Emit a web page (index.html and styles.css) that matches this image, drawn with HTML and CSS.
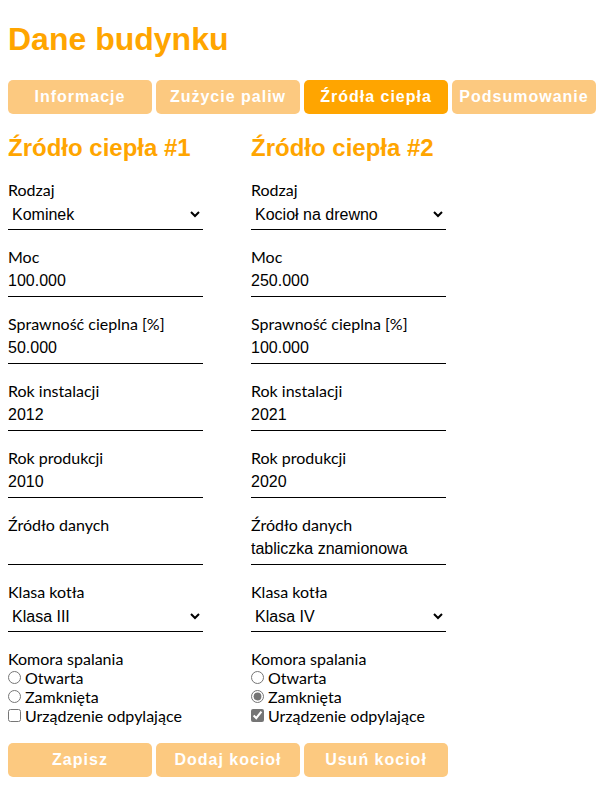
FILE: index.html
```
<!DOCTYPE html>
<html lang="pl">
<head>
<meta charset="utf-8">
<meta name="viewport" content="width=device-width, initial-scale=1">
<title>Dane budynku</title>
<link rel="stylesheet" href="styles.css">
</head>
<body>
<h1>Dane budynku</h1>
<nav class="bar">
  <button type="button" class="btn">Informacje</button>
  <button type="button" class="btn">Zużycie paliw</button>
  <button type="button" class="btn btn-active" aria-current="page">Źródła ciepła</button>
  <button type="button" class="btn">Podsumowanie</button>
</nav>
<form>
  <div class="sources">
    <section class="source">
      <h2>Źródło ciepła #1</h2>
      <div class="field"><label for="type1">Rodzaj</label><select id="type1" class="control"><option>Kominek</option></select></div>
      <div class="field"><label for="power1">Moc</label><input id="power1" class="control" type="text" value="100.000"></div>
      <div class="field"><label for="eff1">Sprawność cieplna [%]</label><input id="eff1" class="control" type="text" value="50.000"></div>
      <div class="field"><label for="inst1">Rok instalacji</label><input id="inst1" class="control" type="text" value="2012"></div>
      <div class="field"><label for="prod1">Rok produkcji</label><input id="prod1" class="control" type="text" value="2010"></div>
      <div class="field"><label for="data1">Źródło danych</label><input id="data1" class="control" type="text" value=""></div>
      <div class="field"><label for="class1">Klasa kotła</label><select id="class1" class="control"><option>Klasa III</option></select></div>
      <fieldset class="chamber">
        <legend>Komora spalania</legend>
        <label class="choice"><input type="radio" name="chamber1">Otwarta</label>
        <label class="choice"><input type="radio" name="chamber1">Zamknięta</label>
        <label class="choice"><input type="checkbox">Urządzenie odpylające</label>
      </fieldset>
    </section>
    <section class="source">
      <h2>Źródło ciepła #2</h2>
      <div class="field"><label for="type2">Rodzaj</label><select id="type2" class="control"><option>Kocioł na drewno</option></select></div>
      <div class="field"><label for="power2">Moc</label><input id="power2" class="control" type="text" value="250.000"></div>
      <div class="field"><label for="eff2">Sprawność cieplna [%]</label><input id="eff2" class="control" type="text" value="100.000"></div>
      <div class="field"><label for="inst2">Rok instalacji</label><input id="inst2" class="control" type="text" value="2021"></div>
      <div class="field"><label for="prod2">Rok produkcji</label><input id="prod2" class="control" type="text" value="2020"></div>
      <div class="field"><label for="data2">Źródło danych</label><input id="data2" class="control" type="text" value="tabliczka znamionowa"></div>
      <div class="field"><label for="class2">Klasa kotła</label><select id="class2" class="control"><option>Klasa IV</option></select></div>
      <fieldset class="chamber">
        <legend>Komora spalania</legend>
        <label class="choice"><input type="radio" name="chamber2">Otwarta</label>
        <label class="choice"><input type="radio" name="chamber2" checked>Zamknięta</label>
        <label class="choice"><input type="checkbox" checked>Urządzenie odpylające</label>
      </fieldset>
    </section>
  </div>
  <div class="bar">
    <button type="button" class="btn">Zapisz</button>
    <button type="button" class="btn">Dodaj kocioł</button>
    <button type="button" class="btn">Usuń kocioł</button>
  </div>
</form>
</body>
</html>
```
FILE: styles.css
```
* {
  box-sizing: border-box;
}

body {
  margin: 20px 4px 20px 8px;
  background: #fff;
  color: #000;
  font: 16px/19px Lato, sans-serif;
}

h1,
h2 {
  margin: 0;
  color: orange;
  font-family: "Liberation Sans", Arial, sans-serif;
  font-weight: bold;
}

h1 {
  margin-bottom: 22px;
  font-size: 32px;
  line-height: 38px;
}

h2 {
  margin-bottom: 19px;
  font-size: 24px;
  line-height: 27px;
}

.bar {
  display: flex;
  gap: 4px;
}

.btn {
  width: 144px;
  height: 34px;
  padding: 0;
  border: 0;
  border-radius: 5px;
  background: #fcc980;
  color: #fff;
  font: bold 16px "Liberation Sans", Arial, sans-serif;
  letter-spacing: 1px;
}

.btn-active {
  background: orange;
}

.sources {
  display: flex;
  gap: 48px;
  margin: 20px 0 18px;
}

.source {
  width: 195px;
}

.field {
  display: flex;
  flex-direction: column;
  margin-bottom: 17px;
}

.control {
  width: 100%;
  height: 31px;
  padding: 0;
  border: 0;
  border-bottom: 1px solid #000;
  border-radius: 0;
  background: transparent;
  color: #000;
  font: 16px "Liberation Sans", Arial, sans-serif;
}

.chamber {
  margin: 0;
  padding: 0;
  border: 0;
}

.chamber legend {
  padding: 0;
}

.choice {
  display: flex;
  align-items: center;
  gap: 4px;
}

.choice input {
  width: 13px;
  height: 13px;
  margin: 0;
  accent-color: #757575;
}
```
